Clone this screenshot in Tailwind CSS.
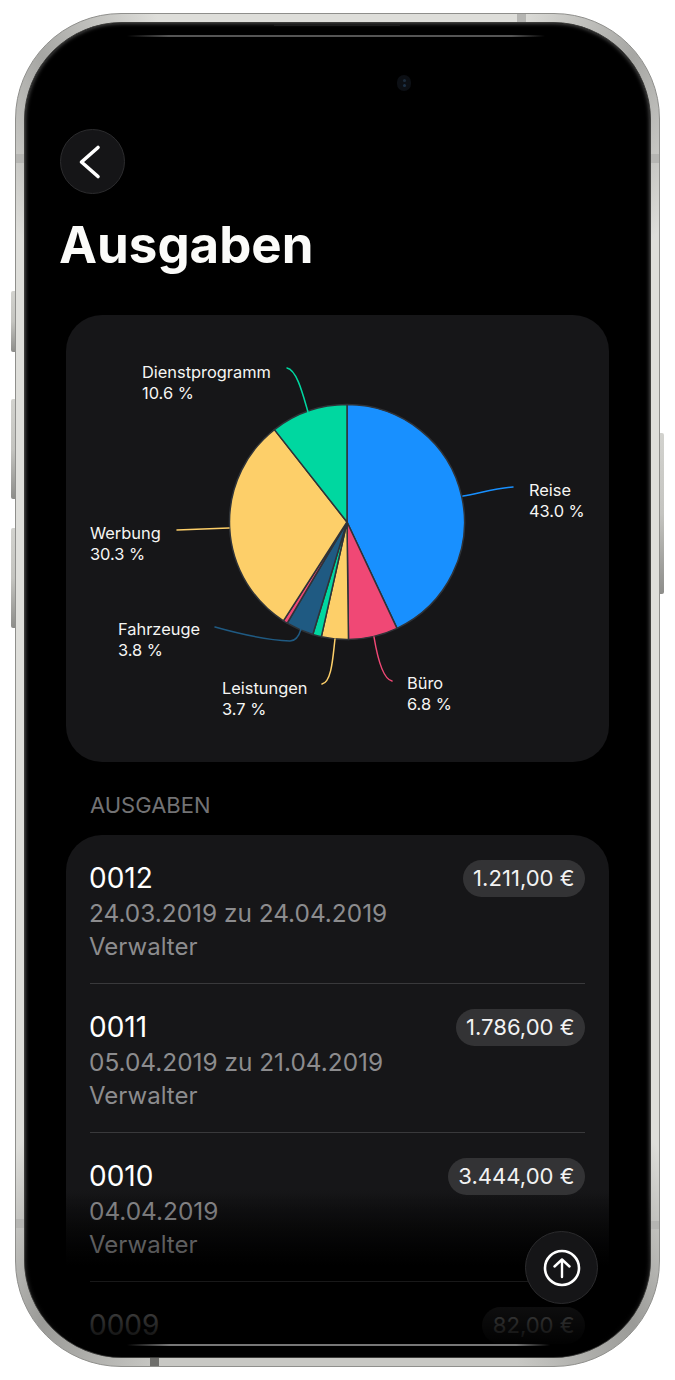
<!DOCTYPE html>
<html lang="de">
<head>
    <meta charset="UTF-8">
    <title>Ausgaben</title>
    <script src="https://cdn.jsdelivr.net/npm/@tailwindcss/browser@4"></script>
</head>
<body class="bg-white font-[Inter,sans-serif] w-[675px] h-[1380px] overflow-hidden">
    <div class="relative ml-[15px] mt-[13px] w-[645px] h-[1354px] inline-block align-top">
        <!-- side buttons -->
        <div class="absolute left-[-4px] top-[278px] w-[5px] h-[61px] rounded-l-[2px] bg-gradient-to-b from-[#d2d2ce] via-[#c4c4c0] to-[#8d8d8a]"></div>
        <div class="absolute left-[-4px] top-[386px] w-[5px] h-[100px] rounded-l-[2px] bg-gradient-to-b from-[#d2d2ce] via-[#c4c4c0] to-[#8d8d8a]"></div>
        <div class="absolute left-[-4px] top-[515px] w-[5px] h-[100px] rounded-l-[2px] bg-gradient-to-b from-[#d2d2ce] via-[#c4c4c0] to-[#8d8d8a]"></div>
        <div class="absolute right-[-4px] top-[420px] w-[5px] h-[161px] rounded-r-[2px] bg-gradient-to-b from-[#d2d2ce] via-[#c4c4c0] to-[#8d8d8a]"></div>

        <!-- frame -->
        <div class="relative h-full rounded-[106px] p-[8px] border border-[#8f8f8c] bg-[conic-gradient(#dededa_15deg,#a6a6a3_25deg,#dededa_35deg,#dededa_145deg,#9a9a97_155deg,#c8c8c4_165deg,#c8c8c4_195deg,#9a9a97_205deg,#dededa_215deg,#dededa_325deg,#a6a6a3_335deg,#dededa_345deg)]">
            <!-- antenna bands -->
            <div class="absolute left-0 top-[140px] w-[8px] h-[9px] bg-[#b5b5b2]"></div>
            <div class="absolute right-0 top-[140px] w-[8px] h-[9px] bg-[#b5b5b2]"></div>
            <div class="absolute left-0 top-[1205px] w-[8px] h-[9px] bg-[#b5b5b2]"></div>
            <div class="absolute right-0 top-[1207px] w-[8px] h-[8px] bg-[#b5b5b2]"></div>
            <div class="absolute left-[501px] top-0 w-[9px] h-[8px] bg-[#b5b5b2]"></div>
            <div class="absolute left-[134px] bottom-0 w-[9px] h-[8px] bg-[#6f6f6c]"></div>

            <div class="relative h-full rounded-[98px] bg-black overflow-hidden border border-[#3c3c3a] shadow-[inset_0_0_4px_#666]">
                <div class="px-[41px]">
                    <div class="pt-[106px] -ml-[6px]">
                        <button class="w-[65px] h-[65px] rounded-full bg-[#151517] border border-[#2c2c2e] flex items-center justify-center">
                            <svg class="mr-[6px]" width="26" height="36" viewBox="0 0 26 36" fill="none" stroke="white" stroke-width="3.6" stroke-linecap="round" stroke-linejoin="round"><path d="M21 3.5 L4.5 18 L21 32.5"/></svg>
                        </button>
                        <h1 class="text-[51px] leading-[56px] font-bold text-[#fbfbf9] mt-[23px] -ml-px">Ausgaben</h1>
                    </div>

                    <!-- chart -->
                    <div class="mt-[42px] h-[447px] rounded-[36px] bg-[#161618]">
                        <svg class="block" width="543" height="447" viewBox="66 315 543 447" fill="none">
                            <g id="pie" stroke="#2f3338" stroke-width="1.5" stroke-linejoin="round"></g>
                            <g stroke-width="1.5" stroke-linecap="round">
                                <path stroke="#1890ff" d="M463 496 C480 493 497 488 513 487"/>
                                <path stroke="#f04875" d="M374 637 C377 655 382 679 392 681"/>
                                <path stroke="#fdcf69" d="M335 639 C333 655 332 682 322 684"/>
                                <path stroke="#1f5a82" d="M215 627 C240 634 265 640 290 641 C296 641 299 636 301 629"/>
                                <path stroke="#fdcf69" d="M177 530 L229 528"/>
                                <path stroke="#00d7a0" d="M287 368 C297 370 303 395 308 412"/>
                            </g>
                            <g fill="#f5f5f3" font-size="16.4" font-family="Inter, sans-serif">
                                <text x="142" y="378">Dienstprogramm</text>
                                <text x="142" y="399">10.6 %</text>
                                <text x="90" y="539">Werbung</text>
                                <text x="90" y="560">30.3 %</text>
                                <text x="118" y="635">Fahrzeuge</text>
                                <text x="118" y="656">3.8 %</text>
                                <text x="222" y="694">Leistungen</text>
                                <text x="222" y="715">3.7 %</text>
                                <text x="529" y="496">Reise</text>
                                <text x="529" y="517">43.0 %</text>
                                <text x="407" y="689">Büro</text>
                                <text x="407" y="710">6.8 %</text>
                            </g>
                        </svg>
                    </div>

                    <h2 class="mt-[31px] ml-[24px] text-[22px] leading-[24px] text-[#727274]">AUSGABEN</h2>

                    <!-- list: the card background itself dies out before the overlay does -->
                    <div class="mt-[18px] rounded-t-[36px] bg-[linear-gradient(#161618_355px,transparent_430px)] px-[24px]">
                        <div class="h-[149px] border-b border-[#39393b] pt-[25px] flex justify-between items-start">
                            <div class="-ml-px">
                                <p class="text-[28px] leading-[37px] text-white">0012</p>
                                <p class="text-[24.4px] leading-[33px] text-[#8c8c8e]">24.03.2019 zu 24.04.2019</p>
                                <p class="text-[24px] leading-[33px] text-[#8c8c8e]">Verwalter</p>
                            </div>
                            <span class="h-[37px] px-[10.5px] rounded-full bg-[#333335] text-[22.1px] leading-[37px] text-[#f2f2f2]">1.211,00 €</span>
                        </div>
                        <div class="h-[149px] border-b border-[#39393b] pt-[25px] flex justify-between items-start">
                            <div class="-ml-px">
                                <p class="text-[28px] leading-[37px] text-white">0011</p>
                                <p class="text-[24.4px] leading-[33px] text-[#8c8c8e]">05.04.2019 zu 21.04.2019</p>
                                <p class="text-[24px] leading-[33px] text-[#8c8c8e]">Verwalter</p>
                            </div>
                            <span class="h-[37px] px-[10.5px] rounded-full bg-[#333335] text-[22.1px] leading-[37px] text-[#f2f2f2]">1.786,00 €</span>
                        </div>
                        <div class="h-[149px] border-b border-[#39393b] pt-[25px] flex justify-between items-start">
                            <div class="-ml-px">
                                <p class="text-[28px] leading-[37px] text-white">0010</p>
                                <p class="text-[24.4px] leading-[33px] text-[#8c8c8e]">04.04.2019</p>
                                <p class="text-[24px] leading-[33px] text-[#8c8c8e]">Verwalter</p>
                            </div>
                            <span class="h-[37px] px-[10.5px] rounded-full bg-[#333335] text-[22.1px] leading-[37px] text-[#f2f2f2]">3.444,00 €</span>
                        </div>
                        <div class="h-[149px] pt-[25px] flex justify-between items-start">
                            <div class="-ml-px">
                                <p class="text-[28px] leading-[37px] text-white">0009</p>
                            </div>
                            <span class="h-[37px] px-[10.5px] rounded-full bg-[#333335] text-[22.1px] leading-[37px] text-[#f2f2f2]">82,00 €</span>
                        </div>
                    </div>
                </div>

                <!-- bottom fade -->
                <div class="absolute left-0 right-0 bottom-0 h-[165px] bg-gradient-to-b from-transparent to-black to-95%"></div>

                <!-- scroll to top -->
                <button class="absolute left-[500px] top-[1208px] w-[73px] h-[73px] rounded-full bg-[#151517] border border-[#2c2c2e] flex items-center justify-center">
                    <svg width="38" height="38" viewBox="0 0 38 38" fill="none" stroke="white" stroke-linecap="round" stroke-linejoin="round">
                        <circle cx="19" cy="19" r="17" stroke-width="2.6"/>
                        <path stroke-width="2.4" d="M19 28 V10.5 M11.5 17.5 L19 10.5 L26.5 17.5"/>
                    </svg>
                </button>

                <!-- bezel details -->
                <div class="absolute left-[249px] w-[126px] top-[1px] h-[2px] bg-[#1c1c1c]"></div>
                <div class="absolute left-[102px] right-[105px] top-[12px] h-[2px] bg-[linear-gradient(90deg,#000,#555_10%,#555_92%,#000)]"></div>
                <div class="absolute left-[102px] right-[100px] bottom-[11px] h-[2px] bg-[linear-gradient(90deg,#000,#777_10%,#777_92%,#000)]"></div>
                <div class="absolute left-[372px] top-[52px] w-[14px] h-[16px] rounded-full bg-[#0c0f14] flex flex-col items-center justify-center gap-[2px]">
                    <span class="w-[3px] h-[3px] rounded-full bg-[#1d2c3c]"></span>
                    <span class="w-[3px] h-[3px] rounded-full bg-[#1d3146]"></span>
                </div>
            </div>
        </div>
    </div>

    <script>
        // pie slices, clockwise from 12 o'clock
        const slices = [
            [43.0, '#1890ff'], [6.8, '#f04875'], [3.7, '#fdcf69'], [1.2, '#00d7a0'],
            [3.8, '#1f5a82'], [0.6, '#f04875'], [30.3, '#fdcf69'], [10.6, '#00d7a0'],
        ];
        const cx = 347, cy = 522, r = 117.5;
        const pie = document.getElementById('pie');
        let start = 0;
        slices.forEach(([pct, color]) => {
            const end = start + pct * 3.6;
            const a = (start - 90) * Math.PI / 180, b = (end - 90) * Math.PI / 180;
            const path = document.createElementNS('http://www.w3.org/2000/svg', 'path');
            path.setAttribute('d', `M${cx} ${cy} L${cx + r * Math.cos(a)} ${cy + r * Math.sin(a)} A${r} ${r} 0 ${pct > 50 ? 1 : 0} 1 ${cx + r * Math.cos(b)} ${cy + r * Math.sin(b)} Z`);
            path.setAttribute('fill', color);
            pie.appendChild(path);
            start = end;
        });
    </script>
</body>
</html>
